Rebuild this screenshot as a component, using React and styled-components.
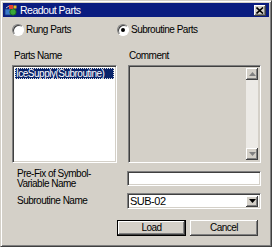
import React from "react";
import styled, { createGlobalStyle } from "styled-components";

const Global = createGlobalStyle`
  html, body { margin: 0; padding: 0; background: #d4d0c8; }
  body {
    font-family: "Liberation Sans", Arial, sans-serif;
    font-size: 10px;
    letter-spacing: -0.5px;
    color: #000;
  }
  * { box-sizing: border-box; }
`;

const Frame = styled.div`
  width: 272px;
  height: 247px;
  background: #d4d0c8;
  border: 1px solid;
  border-color: #d4d0c8 #404040 #404040 #d4d0c8;
  box-shadow: inset 1px 1px #fff, inset -1px -1px #808080;
  padding: 2px;
  display: flex;
  flex-direction: column;
`;

const TitleBar = styled.div`
  height: 14px;
  background: #0a1c80;
  display: flex;
  align-items: center;
  padding: 0 3px 0 1px;
  color: #fff;
  font-size: 10.5px;
`;

const TitleText = styled.span`
  margin-left: 2px;
  flex: 1;
  line-height: 14px;
`;

const CloseBtn = styled.div`
  width: 12px;
  height: 11px;
  background: #d4d0c8;
  box-shadow: inset -1px -1px #404040, inset 1px 1px #fff, inset -2px -2px #808080;
  display: flex;
  align-items: center;
  justify-content: center;
`;

const RadioRow = styled.div`
  display: grid;
  grid-template-columns: 105px auto;
  margin-top: 7px;
  padding-left: 9px;
  height: 12px;
`;

const RadioItem = styled.label`
  display: flex;
  align-items: center;
  gap: 2px;
  line-height: 12px;
`;

const RadioCircle = styled.span`
  position: relative;
  width: 12px;
  height: 12px;
  border-radius: 50%;
  background: #fff;
  border: 1px solid;
  border-color: #808080 #fff #fff #808080;
  box-shadow: inset 1px 1px #404040;
  &::after {
    content: "";
    display: ${(p) => (p.$checked ? "block" : "none")};
    position: absolute;
    left: 3px;
    top: 3px;
    width: 4px;
    height: 4px;
    border-radius: 50%;
    background: #000;
  }
`;

const Panes = styled.div`
  display: grid;
  grid-template-columns: 105px 133px;
  column-gap: 11px;
  padding-left: 9px;
  margin-top: 14px;
`;

const Pane = styled.div`
  display: flex;
  flex-direction: column;
`;

const PaneLabel = styled.div`
  line-height: 12px;
  height: 12px;
  padding-left: ${(p) => p.$indent}px;
  margin-bottom: 3px;
`;

const Sunken = styled.div`
  height: 98px;
  border: 1px solid;
  border-color: #808080 #fff #fff #808080;
  box-shadow: inset 1px 1px #404040, inset -1px -1px #d4d0c8;
  background: ${(p) => (p.$disabled ? "#d4d0c8" : "#fff")};
  padding: 2px;
  display: flex;
  align-items: flex-start;
`;

const ListItem = styled.div`
  width: 100%;
  height: 11px;
  line-height: 11px;
  background: #0a246a;
  color: #fff;
  padding-left: 1px;
  outline: 1px dotted #e0e0e0;
  outline-offset: -1px;
  white-space: nowrap;
  overflow: hidden;
`;

const CommentArea = styled.div`
  flex: 1;
`;

const ScrollBar = styled.div`
  width: 12px;
  height: 100%;
  display: flex;
  flex-direction: column;
  justify-content: space-between;
  background: #eceae6;
`;

const ScrollBtn = styled.div`
  width: 12px;
  height: 12px;
  background: #d4d0c8;
  box-shadow: inset -1px -1px #404040, inset 1px 1px #fff, inset -2px -2px #808080;
  display: flex;
  align-items: center;
  justify-content: center;
`;

const Form = styled.div`
  display: grid;
  grid-template-columns: 110px 134px;
  row-gap: 4px;
  padding-left: 14px;
  margin-top: 6px;
`;

const FieldLabel = styled.div`
  line-height: 10px;
  align-self: ${(p) => p.$align || "start"};
`;

const Field = styled.div`
  height: ${(p) => p.$h}px;
  margin-top: ${(p) => p.$mt || 0}px;
  border: 1px solid;
  border-color: #808080 #fff #fff #808080;
  box-shadow: inset 1px 1px #404040, inset -1px -1px #d4d0c8;
  background: #fff;
  display: flex;
  align-items: center;
  padding: 2px 2px 2px 2px;
  font-size: 11px;
`;

const FieldText = styled.span`
  flex: 1;
  line-height: 12px;
`;

const DropBtn = styled(ScrollBtn)`
  height: 11px;
`;

const Buttons = styled.div`
  display: flex;
  gap: 4px;
  padding-left: 114px;
  margin-top: 11px;
`;

const Button = styled.div`
  width: ${(p) => p.$w}px;
  height: 16px;
  background: #d4d0c8;
  display: flex;
  align-items: center;
  justify-content: center;
  line-height: 12px;
  box-shadow: inset -1px -1px #404040, inset 1px 1px #fff, inset -2px -2px #808080;
  border: ${(p) => (p.$default ? "1px solid #000" : "none")};
`;

const Arrow = ({ up, color = "#808080" }) => (
  <svg width="7" height="4" viewBox="0 0 7 4">
    {up ? (
      <path d="M3.5 0 L7 4 L0 4 Z" fill={color} />
    ) : (
      <path d="M0 0 L7 0 L3.5 4 Z" fill={color} />
    )}
  </svg>
);

const AppIcon = () => (
  <svg width="14" height="13" viewBox="0 0 14 13">
    <rect x="1" y="5" width="6" height="6" fill="#3a78c8" stroke="#1a3a80" strokeWidth="0.8" />
    <circle cx="9" cy="8" r="3.2" fill="#38a838" stroke="#186018" strokeWidth="0.8" />
    <rect x="5" y="1" width="4" height="4" fill="#e04030" />
    <rect x="9.5" y="1.5" width="3" height="3" fill="#f0c020" />
    <path d="M2 4 L5 2" stroke="#c0c0c0" strokeWidth="1" />
  </svg>
);

export default function App() {
  return (
    <>
      <Global />
      <Frame>
        <TitleBar>
          <AppIcon />
          <TitleText>Readout Parts</TitleText>
          <CloseBtn>
            <svg width="8" height="7" viewBox="0 0 8 7">
              <path d="M0.5 0.5 L7 6.5 M7 0.5 L0.5 6.5" stroke="#000" strokeWidth="1.6" />
            </svg>
          </CloseBtn>
        </TitleBar>
        <RadioRow>
          <RadioItem>
            <RadioCircle />
            Rung Parts
          </RadioItem>
          <RadioItem>
            <RadioCircle $checked />
            Subroutine Parts
          </RadioItem>
        </RadioRow>
        <Panes>
          <Pane>
            <PaneLabel $indent={2}>Parts Name</PaneLabel>
            <Sunken>
              <ListItem>IceSupply(Subroutine)</ListItem>
            </Sunken>
          </Pane>
          <Pane>
            <PaneLabel $indent={1}>Comment</PaneLabel>
            <Sunken $disabled>
              <CommentArea />
              <ScrollBar>
                <ScrollBtn>
                  <Arrow up />
                </ScrollBtn>
                <ScrollBtn>
                  <Arrow />
                </ScrollBtn>
              </ScrollBar>
            </Sunken>
          </Pane>
        </Panes>
        <Form>
          <FieldLabel>
            Pre-Fix of Symbol-
            <br />
            Variable Name
          </FieldLabel>
          <Field $h={15} $mt={2} />
          <FieldLabel $align="center">Subroutine Name</FieldLabel>
          <Field $h={16}>
            <FieldText>SUB-02</FieldText>
            <DropBtn>
              <Arrow color="#000" />
            </DropBtn>
          </Field>
        </Form>
        <Buttons>
          <Button $w={69} $default>
            Load
          </Button>
          <Button $w={68}>Cancel</Button>
        </Buttons>
      </Frame>
    </>
  );
}
